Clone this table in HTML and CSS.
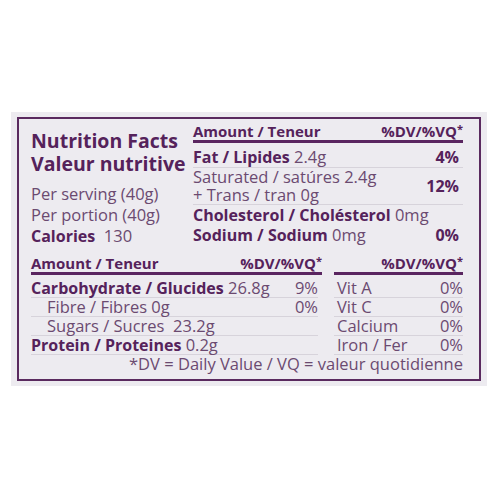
FILE: index.html
```html
<!DOCTYPE html>
<html lang="en">
<head>
    <meta charset="UTF-8">
    <meta name="viewport" content="width=device-width, initial-scale=1.0">
    <title>Nutrition Facts</title>
    <link rel="stylesheet" href="styles.css">
</head>
<body>
    <div class="label">
        <div class="frame">
            <div class="top">
                <div class="intro">
                    <h1>Nutrition Facts<br>Valeur nutritive</h1>
                    <p>Per serving (40g)</p>
                    <p>Per portion (40g)</p>
                    <p><b>Calories</b>&nbsp; 130</p>
                </div>
                <div class="facts">
                    <div class="head"><span>Amount / Teneur</span><span>%DV/%VQ<sup>*</sup></span></div>
                    <div class="row fat"><span><b>Fat / Lipides</b> 2.4g</span><b>4%</b></div>
                    <div class="row sat">
                        <span>Saturated / satúres 2.4g<br>+ Trans / tran 0g</span>
                        <b>12%</b>
                    </div>
                    <div class="row plain"><span><b>Cholesterol / Cholésterol</b> 0mg</span></div>
                    <div class="row plain"><span><b>Sodium / Sodium</b> 0mg</span><b>0%</b></div>
                </div>
            </div>

            <div class="bottom">
                <div class="carbs">
                    <div class="head"><span>Amount / Teneur</span><span>%DV/%VQ<sup>*</sup></span></div>
                    <div class="line"><span><b>Carbohydrate / Glucides</b> 26.8g</span><span>9%</span></div>
                    <div class="line indent"><span>Fibre / Fibres 0g</span><span>0%</span></div>
                    <div class="line indent"><span>Sugars / Sucres&nbsp; 23.2g</span><span></span></div>
                    <div class="line"><span><b>Protein / Proteines</b> 0.2g</span><span></span></div>
                </div>
                <div class="vitamins">
                    <div class="head end"><span>%DV/%VQ<sup>*</sup></span></div>
                    <div class="line"><span>Vit A</span><span>0%</span></div>
                    <div class="line"><span>Vit C</span><span>0%</span></div>
                    <div class="line"><span>Calcium</span><span>0%</span></div>
                    <div class="line"><span>Iron / Fer</span><span>0%</span></div>
                </div>
            </div>

            <p class="note">*DV = Daily Value / VQ = valeur quotidienne</p>
        </div>
    </div>
</body>
</html>
```

FILE: styles.css
```css
body {
    margin: 0;
    background: #ffffff;
    font-family: "Open Sans", "DejaVu Sans", sans-serif;
    color: #6b4a70;
}
.label {
    margin: 112px 0 0 11px;
    width: 476px;
    height: 274px;
    box-sizing: border-box;
    padding: 5px 6px;
    background: #edebf0;
}
.frame {
    height: 264px;
    box-sizing: border-box;
    border: 2px solid #5a2a5f;
    padding: 2px 16px 0 12px;
}
b, h1, .head {
    color: #55225b;
    font-weight: 700;
    font-size: 16px;
}
.top {
    display: grid;
    grid-template-columns: 162px 1fr;
}
.intro h1 {
    margin: 8px 0 8px;
    font-size: 19.5px;
    line-height: 23px;
}
.intro p {
    margin: 0;
    font-size: 16.5px;
    line-height: 21px;
}
.head {
    display: flex;
    justify-content: space-between;
    font-size: 15px;
    line-height: 18px;
    border-bottom: 3px solid #5a2560;
}
.head.end {
    justify-content: flex-end;
}
.head sup {
    font-size: 11px;
    line-height: 0;
    vertical-align: 4px;
}
.facts .head {
    margin-top: 1px;
}
.row {
    display: flex;
    justify-content: space-between;
    align-items: center;
    font-size: 16.5px;
    padding-right: 4px;
}
.row.fat {
    padding-top: 4px;
    line-height: 20px;
    border-bottom: 1px solid #d7d3db;
}
.row.sat {
    line-height: 18px;
    border-bottom: 1px solid #d7d3db;
}
.row.plain {
    line-height: 20px;
}
.bottom {
    display: grid;
    grid-template-columns: 287px 129px;
    column-gap: 16px;
    margin-top: 7px;
}
.carbs .head {
    margin-right: -4px;
}
.line {
    display: flex;
    justify-content: space-between;
    font-size: 16.5px;
    line-height: 18px;
    border-bottom: 1px solid #d7d3db;
}
.line:nth-child(2) {
    margin-top: 4px;
}
.line.indent {
    padding-left: 16px;
}
.vitamins .line {
    padding: 0 0 0 3px;
}
.note {
    margin: 0;
    text-align: right;
    font-size: 16.5px;
    line-height: 18px;
}
```
